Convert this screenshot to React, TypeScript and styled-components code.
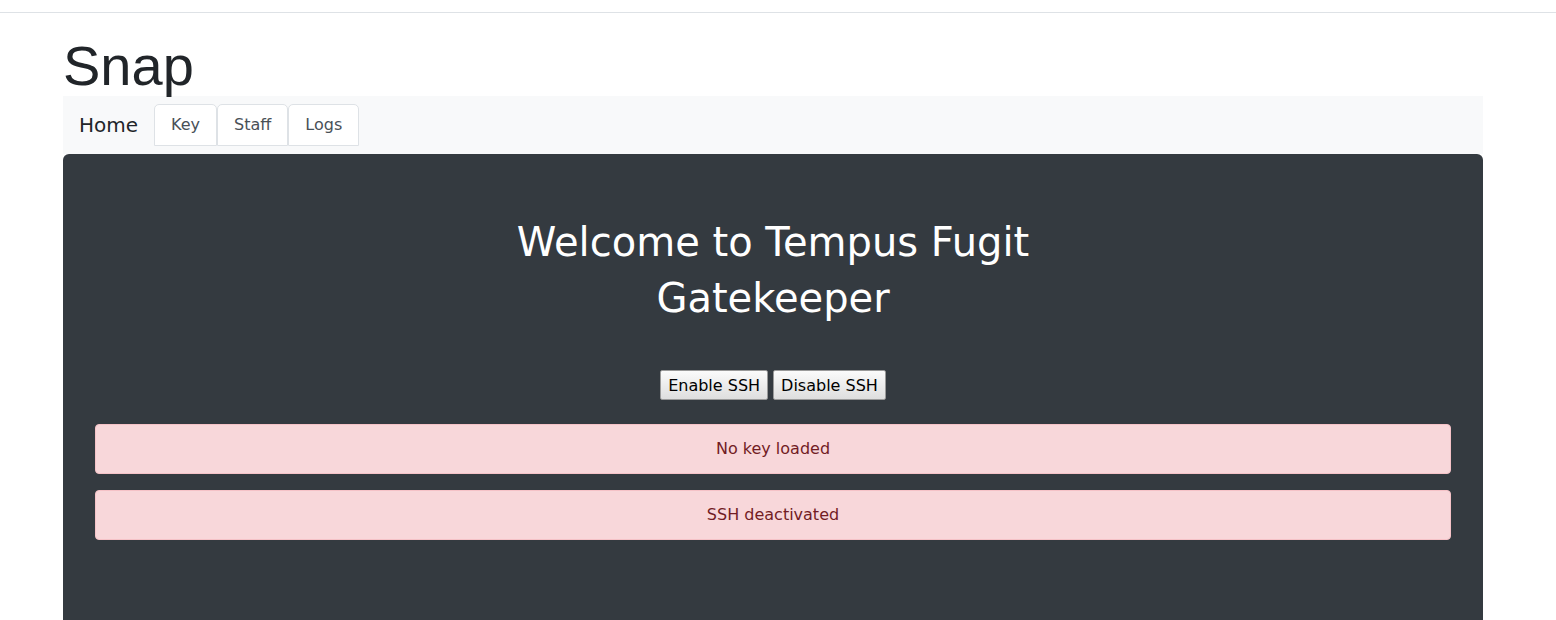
import styled, { createGlobalStyle } from "styled-components";

const GlobalStyle = createGlobalStyle`
  html, body {
    margin: 0;
    padding: 0;
    background: #fff;
    font-family: "DejaVu Sans", sans-serif;
    color: #212529;
  }
`;

const TopRule = styled.div`
  height: 12px;
  border-bottom: 1px solid #dee2e6;
`;

const Container = styled.div`
  width: 1420px;
  margin-left: 63px;
`;

const Brand = styled.h1`
  margin: 0;
  height: 83px;
  font-family: "Liberation Sans", Arial, sans-serif;
  font-size: 56px;
  font-weight: 400;
  line-height: 106px;
  color: #212529;
  overflow: visible;
`;

const NavBar = styled.nav`
  display: flex;
  align-items: flex-end;
  height: 58px;
  background: #f8f9fa;
  padding-left: 16px;
`;

const HomeLink = styled.span`
  align-self: center;
  font-size: 20px;
  color: #212529;
  margin-right: 16px;
`;

const Tabs = styled.ul`
  display: flex;
  list-style: none;
  margin: 0 0 8px;
  padding: 0;
`;

const Tab = styled.li`
  height: 42px;
  box-sizing: border-box;
  padding: 0 16px 1px;
  display: flex;
  align-items: center;
  font-size: 16px;
  color: #495057;
  background: #fff;
  border: 1px solid #dee2e6;
  border-radius: 5px 5px 0 0;
`;

const Panel = styled.main`
  background: #343a40;
  border-radius: 6px 6px 0 0;
  padding: 60px 32px 80px;
  text-align: center;
`;

const Title = styled.h2`
  width: 560px;
  margin: 0 auto 44px;
  font-size: 40px;
  font-weight: 400;
  line-height: 56px;
  color: #fff;
`;

const Actions = styled.div`
  display: flex;
  justify-content: center;
  gap: 5px;
  margin-bottom: 24px;
`;

const Button = styled.button`
  height: 30px;
  padding: 0 7px;
  font-family: "DejaVu Sans", sans-serif;
  font-size: 16px;
  color: #000;
  background: linear-gradient(#fbfbfb, #dedede);
  border: 1px solid #9a9a9a;
  border-radius: 2px;
`;

const Alert = styled.div`
  height: 50px;
  box-sizing: border-box;
  padding-bottom: 2px;
  margin-bottom: 16px;
  display: flex;
  align-items: center;
  justify-content: center;
  font-size: 16px;
  color: #721c24;
  background: #f8d7da;
  border: 1px solid #f5c2c7;
  border-radius: 4px;
`;

export default function App() {
  return (
    <>
      <GlobalStyle />
      <TopRule />
      <Container>
        <Brand>Snap</Brand>
        <NavBar>
          <HomeLink>Home</HomeLink>
          <Tabs>
            <Tab>Key</Tab>
            <Tab>Staff</Tab>
            <Tab>Logs</Tab>
          </Tabs>
        </NavBar>
        <Panel>
          <Title>Welcome to Tempus Fugit Gatekeeper</Title>
          <Actions>
            <Button>Enable SSH</Button>
            <Button>Disable SSH</Button>
          </Actions>
          <Alert>No key loaded</Alert>
          <Alert>SSH deactivated</Alert>
        </Panel>
      </Container>
    </>
  );
}
